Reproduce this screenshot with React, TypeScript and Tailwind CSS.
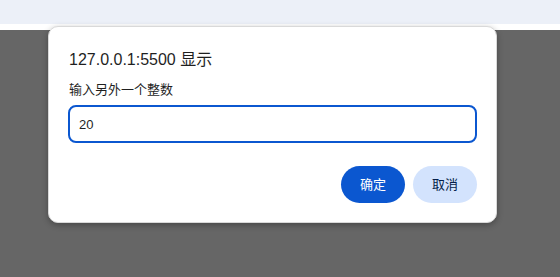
import { useState } from "react";

const font = {
  fontFamily: '"Liberation Sans", "Noto Sans CJK SC", sans-serif',
};

export default function App() {
  const [value, setValue] = useState("20");

  return (
    <div className="relative h-[277px] w-[560px] overflow-hidden" style={font}>
      <div className="flex h-full flex-col">
        <div className="h-6 bg-[#ecf0f8]" />
        <div className="h-[6px] bg-white" />
        <div className="flex-1 bg-[#666666]" />
      </div>

      <div className="absolute left-[48px] top-[26px] flex w-[449px] flex-col rounded-[10px] border border-[#d9d9d9] bg-white px-[19px] pb-[19px] pt-[23px] shadow-[0_2px_6px_rgba(0,0,0,0.3)]">
        <div className="pl-px text-[16px] leading-5 text-[#1f1f1f]">127.0.0.1:5500 显示</div>
        <div className="mt-3 pl-px text-[13px] leading-4 text-[#1f1f1f]">输入另外一个整数</div>
        <input
          value={value}
          onChange={(e) => setValue(e.target.value)}
          autoFocus
          className="mt-[7px] h-[38px] w-full rounded-lg border-2 border-[#0b57d0] px-[9px] text-[13px] text-[#1f1f1f] caret-black outline-none"
        />
        <div className="mt-[23px] flex justify-end gap-2">
          <button className="h-[37px] w-16 rounded-full bg-[#0b57d0] text-[13px] text-white">
            确定
          </button>
          <button className="h-[37px] w-16 rounded-full bg-[#d3e3fd] text-[13px] text-[#041e49]">
            取消
          </button>
        </div>
      </div>
    </div>
  );
}
